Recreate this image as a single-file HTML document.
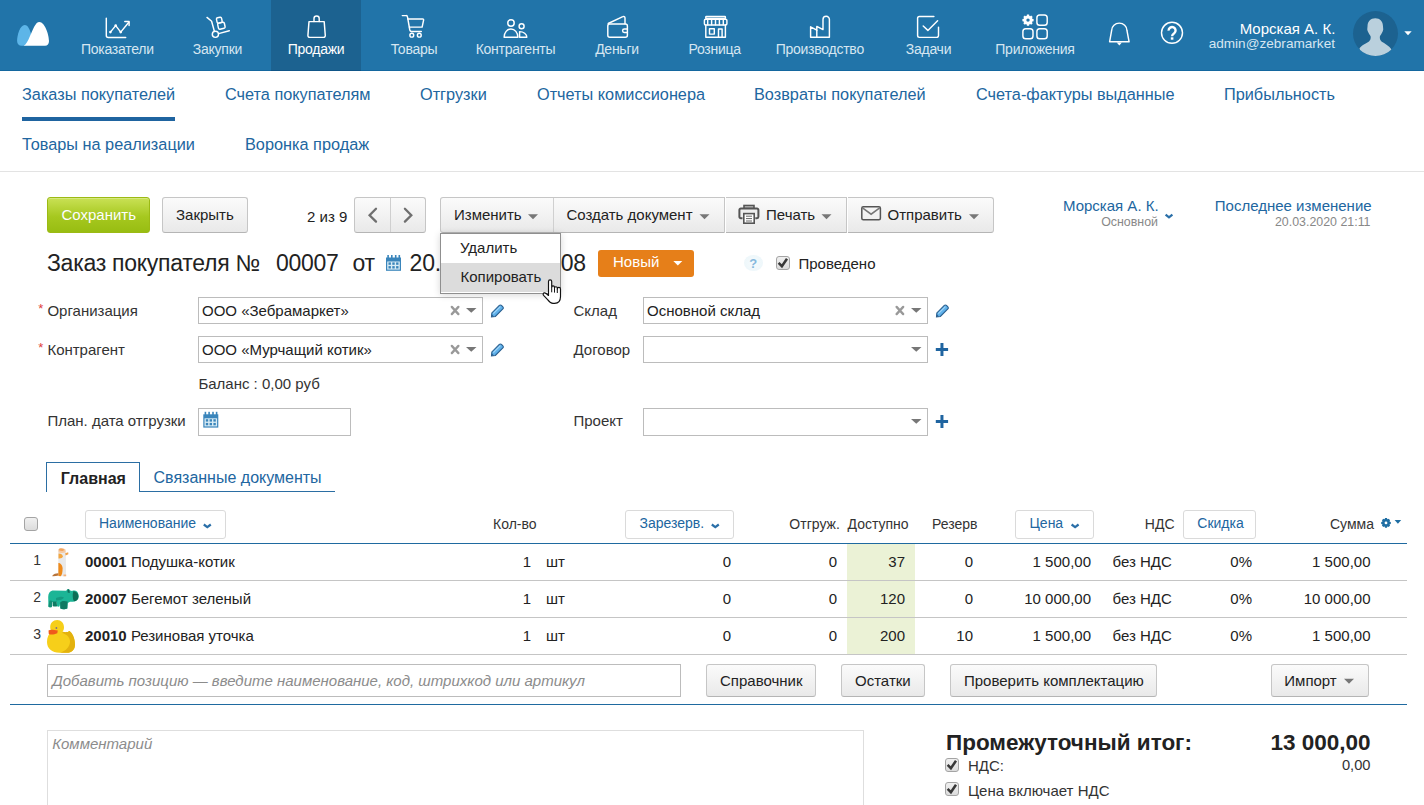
<!DOCTYPE html>
<html><head><meta charset="utf-8">
<style>
*{box-sizing:border-box;margin:0;padding:0}
html,body{width:1424px;height:805px;overflow:hidden;background:#fff}
body{font-family:"Liberation Sans",sans-serif;color:#222;position:relative}
.a{position:absolute;white-space:nowrap}
svg.a{overflow:visible}
</style></head><body>

<div class="a" style="left:0px;top:0px;width:1424px;height:70px;background:#2174a9"></div>
<div class="a" style="left:0px;top:70px;width:1424px;height:1px;background:#14679f"></div>
<div class="a" style="left:271px;top:0px;width:90px;height:70px;background:#1c6290"></div>
<div class="a" style="left:271px;top:70px;width:90px;height:1px;background:#0f5587"></div>
<div class="a" style="top:40.15px;font-size:14px;line-height:18px;color:#d6e6f1;letter-spacing:-0.25px;left:-182.7px;width:600px;text-align:center;">Показатели</div>
<div class="a" style="top:40.15px;font-size:14px;line-height:18px;color:#d6e6f1;letter-spacing:-0.25px;left:-82.5px;width:600px;text-align:center;">Закупки</div>
<div class="a" style="top:40.15px;font-size:14px;line-height:18px;color:#ffffff;letter-spacing:-0.25px;left:16px;width:600px;text-align:center;">Продажи</div>
<div class="a" style="top:40.15px;font-size:14px;line-height:18px;color:#d6e6f1;letter-spacing:-0.25px;left:114px;width:600px;text-align:center;">Товары</div>
<div class="a" style="top:40.15px;font-size:14px;line-height:18px;color:#d6e6f1;letter-spacing:-0.25px;left:215.5px;width:600px;text-align:center;">Контрагенты</div>
<div class="a" style="top:40.15px;font-size:14px;line-height:18px;color:#d6e6f1;letter-spacing:-0.25px;left:317px;width:600px;text-align:center;">Деньги</div>
<div class="a" style="top:40.15px;font-size:14px;line-height:18px;color:#d6e6f1;letter-spacing:-0.25px;left:414.70000000000005px;width:600px;text-align:center;">Розница</div>
<div class="a" style="top:40.15px;font-size:14px;line-height:18px;color:#d6e6f1;letter-spacing:-0.25px;left:519.8px;width:600px;text-align:center;">Производство</div>
<div class="a" style="top:40.15px;font-size:14px;line-height:18px;color:#d6e6f1;letter-spacing:-0.25px;left:628.5px;width:600px;text-align:center;">Задачи</div>
<div class="a" style="top:40.15px;font-size:14px;line-height:18px;color:#d6e6f1;letter-spacing:-0.25px;left:735px;width:600px;text-align:center;">Приложения</div>
<svg class="a" style="left:0;top:0" width="1424" height="70" viewBox="0 0 1424 70">
<g fill="none" stroke="#ffffff" stroke-width="1.45" stroke-linecap="round" stroke-linejoin="round">
<!-- chart -->
<path d="M106.3 18.2V35.5a2 2 0 0 0 2 2H125.7"/>
<path d="M110.4 32.1L115.7 25.6L120.7 32.1L128.8 22.2"/>
<path d="M124.8 21.4H129.1V25.6"/>
<!-- trolley -->
<path d="M207 17.4L211.6 21.3L214.3 31"/>
<circle cx="215.4" cy="34.3" r="3.1"/>
<path d="M218.6 33.6L229.3 30.8"/>
<rect x="-2.6" y="-2.6" width="5.2" height="5.4" rx="1.3" transform="translate(219.3 20.1) rotate(-12)"/>
<rect x="-3.4" y="-3.1" width="6.8" height="6.2" rx="1.3" transform="translate(221.4 25.7) rotate(-12)"/>
<!-- bag -->
<path d="M309 21.6H324.2L325.3 35.6a1.8 1.8 0 0 1 -1.8 1.8H309.7a1.8 1.8 0 0 1 -1.8 -1.8Z"/>
<path d="M314 21.6V18.6a2.6 2.6 0 0 1 5.2 0V21.6"/>
<!-- cart -->
<path d="M402.3 15.6H406a1.5 1.5 0 0 1 1.5 1.3L409.8 30a1.8 1.8 0 0 0 1.8 1.4H421.3"/>
<path d="M407.9 18.9H422.6a1 1 0 0 1 1 1.2L422.1 27.1H409.4"/>
<circle cx="411.8" cy="35.2" r="1.9"/>
<circle cx="419.3" cy="35.2" r="1.9"/>
<!-- people -->
<circle cx="511" cy="23" r="3.2"/>
<path d="M504.1 37.3C504.1 32.5 507.2 29 511 29S517.9 32.5 517.9 37.3Z"/>
<circle cx="521.6" cy="26.2" r="2.5"/>
<path d="M519.6 37.3V31.6C523.5 31.6 526.8 34 526.8 37.3Z"/>
<!-- wallet -->
<rect x="607.8" y="23.9" width="19.6" height="13.4" rx="2"/>
<path d="M608.2 23.5L622.8 16.6a1.5 1.5 0 0 1 2.2 1.3V23.8"/>
<path d="M627.4 29H624.3a1.7 1.7 0 0 0 0 3.4H627.4"/>
<!-- shop -->
<rect x="705.8" y="16.4" width="19.6" height="2" rx="0.5"/>
<rect x="704.4" y="19.2" width="22.5" height="5.7" rx="1.2"/>
<path d="M707.7 19.4V24.7M711.6 19.4V24.7M715.5 19.4V24.7M719.4 19.4V24.7M723.3 19.4V24.7"/>
<path d="M705.8 25V37.3H725.4V25"/>
<rect x="709.5" y="28.7" width="4.8" height="5.4"/>
<path d="M718.5 37.3V29H722.1V37.3"/>
<!-- factory -->
<path d="M810.6 37.3V26.8L816.8 30.2V26.4L823 29.6V19.5a3.2 3.2 0 0 1 6.4 0V37.3Z"/>
<path d="M816.8 30.2V37.2"/>
<!-- tasks -->
<path d="M933.9 16.5H919.4a1.8 1.8 0 0 0 -1.8 1.8V35.6a1.8 1.8 0 0 0 1.8 1.8H936.7a1.8 1.8 0 0 0 1.8 -1.8V27.1"/>
<path d="M923.2 26L927.9 30.4L937.6 20.8"/>
<!-- apps -->
<rect x="1036.9" y="14.9" width="10.3" height="10.3" rx="2.8"/>
<rect x="1022.9" y="28.7" width="10.1" height="10" rx="2.8"/>
<rect x="1036.9" y="28.7" width="10.3" height="10" rx="2.8"/>
<!-- bell -->
<path d="M1111.7 30.2a7.6 7.1 0 0 1 15.2 0L1129.1 41.8H1109.6Z"/>
<!-- help -->
<circle cx="1172" cy="32.8" r="10.5"/>
</g>
<g fill="#ffffff">
<circle cx="110.4" cy="32.1" r="1.3"/><circle cx="115.7" cy="25.6" r="1.3"/><circle cx="120.7" cy="32.1" r="1.3"/>
<path d="M1116.7 42.5H1121.9L1119.3 45.4Z"/>
<!-- gear -->
<path d="M1026.70 15.79 L1026.92 14.50 L1029.08 14.50 L1029.30 15.79 L1030.13 16.13 L1031.19 15.38 L1032.72 16.91 L1031.97 17.97 L1032.31 18.80 L1033.60 19.02 L1033.60 21.18 L1032.31 21.40 L1031.97 22.23 L1032.72 23.29 L1031.19 24.82 L1030.13 24.07 L1029.30 24.41 L1029.08 25.70 L1026.92 25.70 L1026.70 24.41 L1025.87 24.07 L1024.81 24.82 L1023.28 23.29 L1024.03 22.23 L1023.69 21.40 L1022.40 21.18 L1022.40 19.02 L1023.69 18.80 L1024.03 17.97 L1023.28 16.91 L1024.81 15.38 L1025.87 16.13Z"/>
<!-- logo -->
<path d="M24.7 25.1C20 25.1 17.1 35 17.1 41C17.1 44 19 45.8 21.5 45.8H25C28 43 30 40 31.5 35.5C30 30 28 25.1 24.7 25.1Z" fill="#5db5e8"/>
<path d="M39.5 21.9C35 21.9 33 30 30 36C28 41 26 44.5 23.8 45.8H45C47.5 45.8 49 44 49 41C49 34 44.5 21.9 39.5 21.9Z"/>
<!-- avatar -->
<circle cx="1375.5" cy="33.5" r="22.5" fill="#1c6290"/>
<path d="M1404.3 31.3H1411.7L1408 35.2Z"/>
</g>
<circle cx="1028" cy="20.1" r="1.7" fill="#2174a9"/>
<path d="M1168.6 30.6a3.5 3.4 0 1 1 5.6 2.6C1172.9 34.1 1172.1 34.7 1172.1 36.2" fill="none" stroke="#fff" stroke-width="2.4"/><rect x="1170.8" y="37.3" width="2.6" height="2.4" fill="#fff"/>
<clipPath id="avc"><circle cx="1375.5" cy="33.5" r="22.5"/></clipPath>
<g clip-path="url(#avc)" fill="#bad0dd">
<path d="M1375.3 18.3C1370.5 18.3 1367.5 21.5 1367.5 26.5C1367.5 28 1367 29 1367.5 30.5C1368 32 1369 34 1370.5 36C1371 38 1370.5 40 1369 41.5C1366 43.5 1361.5 45 1359.5 48.3L1361 57H1390L1391.5 49.5C1389.5 46 1384.5 43.5 1381.5 41.5C1380 40 1379.5 38 1380 36C1381.5 34 1382.5 32 1383 30.5C1383.5 29 1383 28 1383 26.5C1383 21.5 1380 18.3 1375.3 18.3Z"/>
</g>
</svg>
<div class="a" style="top:19.10px;font-size:15px;line-height:19px;color:#fff;right:88.70000000000005px;">Морская А. К.</div>
<div class="a" style="top:35.49px;font-size:13.6px;line-height:17px;color:#d6e6f1;right:89px;">admin@zebramarket</div>
<div class="a" style="top:83.75px;font-size:16.3px;line-height:20px;color:#2166a0;left:22px;">Заказы покупателей</div>
<div class="a" style="top:83.75px;font-size:16.3px;line-height:20px;color:#2166a0;left:225px;">Счета покупателям</div>
<div class="a" style="top:83.75px;font-size:16.3px;line-height:20px;color:#2166a0;left:420px;">Отгрузки</div>
<div class="a" style="top:83.75px;font-size:16.3px;line-height:20px;color:#2166a0;left:537px;">Отчеты комиссионера</div>
<div class="a" style="top:83.75px;font-size:16.3px;line-height:20px;color:#2166a0;left:754px;">Возвраты покупателей</div>
<div class="a" style="top:83.75px;font-size:16.3px;line-height:20px;color:#2166a0;left:976px;">Счета-фактуры выданные</div>
<div class="a" style="top:83.75px;font-size:16.3px;line-height:20px;color:#2166a0;left:1224px;">Прибыльность</div>
<div class="a" style="top:134.15px;font-size:16.3px;line-height:20px;color:#2166a0;left:22px;">Товары на реализации</div>
<div class="a" style="top:134.15px;font-size:16.3px;line-height:20px;color:#2166a0;left:245px;">Воронка продаж</div>
<div class="a" style="left:22px;top:117px;width:153px;height:4px;background:#1f64a0"></div>
<div class="a" style="left:0px;top:171px;width:1424px;height:1px;background:#e3e3e3"></div>
<div class="a" style="left:47px;top:197px;width:103px;height:36px;border:1px solid #9cba14;border-radius:3px;background:linear-gradient(#c9e155,#a6c81f 55%,#98bd12);box-shadow:inset 0 1px 0 rgba(255,255,255,0.25)"></div>
<div class="a" style="top:205.30px;font-size:15px;line-height:19px;color:#fff;left:61.5px;text-shadow:0 0 0.5px rgba(0,0,0,0.1)">Сохранить</div>
<div class="a" style="left:162px;top:197px;width:86px;height:36px;border:1px solid #c6c6c6;border-bottom-color:#b5b5b5;border-radius:3px;background:linear-gradient(#fbfbfb,#e9e9e9);"></div>
<div class="a" style="top:205.30px;font-size:15px;line-height:19px;color:#222;left:176px;">Закрыть</div>
<div class="a" style="top:207.00px;font-size:15px;line-height:19px;color:#222;left:307px;">2 из 9</div>
<div class="a" style="left:354px;top:197px;width:72px;height:36px;border:1px solid #c6c6c6;border-bottom-color:#b5b5b5;border-radius:3px;background:linear-gradient(#fbfbfb,#e9e9e9);"></div>
<div class="a" style="left:390px;top:198px;width:1px;height:34px;background:#cfcfcf"></div>
<svg class="a" style="left:0;top:0" width="1424" height="300" viewBox="0 0 1424 300"><g fill="none" stroke="#6f6f6f" stroke-width="2.3" stroke-linecap="round" stroke-linejoin="miter"><path d="M376 208.8L369.6 215.2L376 221.6"/><path d="M404.9 208.8L411.3 215.2L404.9 221.6"/></g></svg>
<div class="a" style="left:440px;top:197px;width:285px;height:36px;border:1px solid #c6c6c6;border-bottom-color:#b5b5b5;border-radius:3px 0 0 3px;background:linear-gradient(#fbfbfb,#e9e9e9);"></div>
<div class="a" style="left:726px;top:197px;width:121px;height:36px;border:1px solid #c6c6c6;border-left:none;border-bottom-color:#b5b5b5;background:linear-gradient(#fbfbfb,#e9e9e9);"></div>
<div class="a" style="left:848px;top:197px;width:146px;height:36px;border:1px solid #c6c6c6;border-left:none;border-bottom-color:#b5b5b5;border-radius:0 3px 3px 0;background:linear-gradient(#fbfbfb,#e9e9e9);"></div>
<div class="a" style="left:553px;top:198px;width:1px;height:34px;background:#d0d0d0"></div>
<div class="a" style="top:205.30px;font-size:15px;line-height:19px;color:#222;left:454px;">Изменить</div>
<div class="a" style="top:205.30px;font-size:15px;line-height:19px;color:#222;left:566.4px;">Создать документ</div>
<div class="a" style="top:205.30px;font-size:15px;line-height:19px;color:#222;left:766px;">Печать</div>
<div class="a" style="top:205.30px;font-size:15px;line-height:19px;color:#222;left:887.5px;">Отправить</div>
<svg class="a" style="left:0;top:0" width="1424" height="805" viewBox="0 0 1424 805"><path d="M528 214.2H538L533.0 219.2Z" fill="#777"/><path d="M699.5 214.2H709.5L704.5 219.2Z" fill="#777"/><path d="M821.5 214.2H831.5L826.5 219.2Z" fill="#777"/><path d="M969 214.2H979L974.0 219.2Z" fill="#777"/><g fill="none" stroke="#555" stroke-width="2"><rect x="744" y="205.5" width="10" height="3" fill="#c9c9c9" stroke-width="1.6"/><path d="M742.5 218.2H740.8a1.4 1.4 0 0 1 -1.4 -1.4V210a1.4 1.4 0 0 1 1.4 -1.4H757a1.4 1.4 0 0 1 1.4 1.4V216.8a1.4 1.4 0 0 1 -1.4 1.4H755.3" fill="#eee"/><rect x="743.8" y="213.6" width="10.4" height="9.6" fill="#fff" stroke-width="1.6"/></g><path d="M746 216.2H752M746 218.6H752M746 221H752" stroke="#666" stroke-width="1"/><g fill="none" stroke="#555" stroke-width="1.5"><rect x="861.8" y="206.8" width="18.6" height="13" rx="1.5"/><path d="M862.5 207.8L871.1 214.2L879.7 207.8" stroke="#777"/></g></svg>
<div class="a" style="top:196.30px;font-size:15px;line-height:19px;color:#2166a0;left:1063px;">Морская А. К.</div>
<div class="a" style="top:213.70px;font-size:12.4px;line-height:16px;color:#888;right:266px;">Основной</div>
<svg class="a" style="left:1164px;top:212px" width="12" height="8" viewBox="0 0 12 8"><path d="M1.6 2.6L5 5.4L8.4 2.6" fill="none" stroke="#2a6fa8" stroke-width="2.2"/></svg>
<div class="a" style="top:196.30px;font-size:15px;line-height:19px;color:#2166a0;left:1214.8px;">Последнее изменение</div>
<div class="a" style="top:213.70px;font-size:12.4px;line-height:16px;color:#888;right:53.5px;">20.03.2020 21:11</div>
<div class="a" style="top:248.53px;font-size:23px;line-height:29px;color:#222;letter-spacing:-0.27px;left:47px;">Заказ покупателя №</div>
<div class="a" style="top:248.53px;font-size:23px;line-height:29px;color:#222;letter-spacing:-0.27px;left:276px;">00007</div>
<div class="a" style="top:248.53px;font-size:23px;line-height:29px;color:#222;letter-spacing:-0.27px;left:352.5px;">от</div>
<div class="a" style="top:248.53px;font-size:23px;line-height:29px;color:#222;letter-spacing:-0.16px;left:409.5px;">20.03.2020 21:08</div>
<svg class="a" style="left:0;top:0" width="1424" height="805" viewBox="0 0 1424 805"><g transform="translate(386 255)"><rect x="0" y="2.5" width="15" height="13.3" fill="#3a85bb"/><rect x="1.3" y="0" width="1.6" height="3.5" fill="#3a85bb"/><rect x="5" y="0" width="1.6" height="3.5" fill="#3a85bb"/><rect x="8.9" y="0" width="1.6" height="3.5" fill="#3a85bb"/><rect x="12.5" y="0" width="1.6" height="3.5" fill="#3a85bb"/><rect x="1.2" y="6.5" width="12.6" height="8.1" fill="#d9ecf5"/><rect x="2.5" y="7.3999999999999995" width="2.4" height="2.4" fill="#3a85bb"/><rect x="2.5" y="11.100000000000001" width="2.4" height="2.4" fill="#3a85bb"/><rect x="6.3" y="7.3999999999999995" width="2.4" height="2.4" fill="#3a85bb"/><rect x="6.3" y="11.100000000000001" width="2.4" height="2.4" fill="#3a85bb"/><rect x="10.100000000000001" y="7.3999999999999995" width="2.4" height="2.4" fill="#3a85bb"/><rect x="10.100000000000001" y="11.100000000000001" width="2.4" height="2.4" fill="#3a85bb"/></g></svg>
<div class="a" style="left:598px;top:250px;width:96px;height:27px;background:#e67f19;border-radius:3px"></div>
<div class="a" style="top:252.10px;font-size:15px;line-height:19px;color:#fff;left:613px;">Новый</div>
<svg class="a" style="left:0;top:0" width="1424" height="805" viewBox="0 0 1424 805"><path d="M673.3 261H682.3L677.8 265.6Z" fill="#fff"/></svg>
<div class="a" style="left:744px;top:255px;width:19px;height:16px;border-radius:50%;background:radial-gradient(#f6fbfd,#eaf5f9)"></div>
<div class="a" style="top:255.50px;font-size:13px;line-height:16px;color:#86b9dd;font-weight:bold;left:453.29999999999995px;width:600px;text-align:center;">?</div>
<div class="a" style="left:776px;top:256px;width:14px;height:14px;border:1px solid #a4a4a4;border-radius:3px;background:linear-gradient(#f0f0f0,#dcdcdc)"></div><svg class="a" style="left:776px;top:256px" width="14" height="14" viewBox="0 0 14 14"><path d="M2.6 6.9L5.9 10.2L11 2.8" fill="none" stroke="#383838" stroke-width="2.5"/></svg>
<div class="a" style="top:254.30px;font-size:15px;line-height:19px;color:#222;left:798.5px;">Проведено</div>
<div class="a" style="top:301.00px;font-size:13px;line-height:16px;color:#e0403a;left:38.3px;">*</div>
<div class="a" style="top:300.60px;font-size:15px;line-height:19px;color:#333;left:47.4px;">Организация</div>
<div class="a" style="left:198px;top:297px;width:285px;height:27px;border:1px solid #bcbcbc;background:#fff"></div>
<div class="a" style="top:300.90px;font-size:15px;line-height:19px;color:#222;left:202px;">ООО «Зебрамаркет»</div>
<div class="a" style="top:340.00px;font-size:13px;line-height:16px;color:#e0403a;left:38.3px;">*</div>
<div class="a" style="top:339.60px;font-size:15px;line-height:19px;color:#333;left:47.4px;">Контрагент</div>
<div class="a" style="left:198px;top:336px;width:285px;height:27px;border:1px solid #bcbcbc;background:#fff"></div>
<div class="a" style="top:339.90px;font-size:15px;line-height:19px;color:#222;left:202px;">ООО «Мурчащий котик»</div>
<div class="a" style="top:373.60px;font-size:15px;line-height:19px;color:#333;left:198.4px;">Баланс : 0,00 руб</div>
<div class="a" style="top:411.10px;font-size:15px;line-height:19px;color:#333;left:47.4px;">План. дата отгрузки</div>
<div class="a" style="left:198px;top:408px;width:153px;height:28px;border:1px solid #bcbcbc;background:#fff"></div>
<div class="a" style="top:300.60px;font-size:15px;line-height:19px;color:#333;left:573.5px;">Склад</div>
<div class="a" style="left:643px;top:297px;width:285px;height:27px;border:1px solid #bcbcbc;background:#fff"></div>
<div class="a" style="top:300.90px;font-size:15px;line-height:19px;color:#222;left:647px;">Основной склад</div>
<div class="a" style="top:339.60px;font-size:15px;line-height:19px;color:#333;left:573.5px;">Договор</div>
<div class="a" style="left:643px;top:336px;width:285px;height:27px;border:1px solid #bcbcbc;background:#fff"></div>
<div class="a" style="top:411.10px;font-size:15px;line-height:19px;color:#333;left:573.5px;">Проект</div>
<div class="a" style="left:643px;top:408px;width:285px;height:28px;border:1px solid #bcbcbc;background:#fff"></div>
<svg class="a" style="left:0;top:0" width="1424" height="805" viewBox="0 0 1424 805"><path d="M451.8 306.90000000000003L458.4 314.1M458.4 306.90000000000003L451.8 314.1" stroke="#999" stroke-width="2.3" stroke-linecap="round"/><path d="M466 308H476.5L471.25 312.7Z" fill="#777"/><path d="M451.8 345.90000000000003L458.4 353.1M458.4 345.90000000000003L451.8 353.1" stroke="#999" stroke-width="2.3" stroke-linecap="round"/><path d="M466 347H476.5L471.25 351.7Z" fill="#777"/><path d="M896.6 306.90000000000003L903.2 314.1M903.2 306.90000000000003L896.6 314.1" stroke="#999" stroke-width="2.3" stroke-linecap="round"/><path d="M911 308H921.5L916.25 312.7Z" fill="#777"/><path d="M911 347H921.5L916.25 351.7Z" fill="#777"/><path d="M911 419H921.5L916.25 423.7Z" fill="#777"/><g transform="translate(491.5 316.8) rotate(-45)"><path d="M0 0L3 -2.5H13.6a1.5 1.5 0 0 1 1.5 1.5V1A1.5 1.5 0 0 1 13.6 2.5H3Z" fill="#5eb0ea" stroke="#2b5f8e" stroke-width="1.1"/><path d="M0 0L2 -1.6V1.6Z" fill="#2b5f8e"/><path d="M3.5 -0.9H13.5" stroke="#a8d8f8" stroke-width="1"/></g><g transform="translate(491.5 355.8) rotate(-45)"><path d="M0 0L3 -2.5H13.6a1.5 1.5 0 0 1 1.5 1.5V1A1.5 1.5 0 0 1 13.6 2.5H3Z" fill="#5eb0ea" stroke="#2b5f8e" stroke-width="1.1"/><path d="M0 0L2 -1.6V1.6Z" fill="#2b5f8e"/><path d="M3.5 -0.9H13.5" stroke="#a8d8f8" stroke-width="1"/></g><g transform="translate(936.5 316.8) rotate(-45)"><path d="M0 0L3 -2.5H13.6a1.5 1.5 0 0 1 1.5 1.5V1A1.5 1.5 0 0 1 13.6 2.5H3Z" fill="#5eb0ea" stroke="#2b5f8e" stroke-width="1.1"/><path d="M0 0L2 -1.6V1.6Z" fill="#2b5f8e"/><path d="M3.5 -0.9H13.5" stroke="#a8d8f8" stroke-width="1"/></g><path d="M935.8 349.5H948.0999999999999M941.9499999999999 343V356" stroke="#1f64a0" stroke-width="3"/><path d="M935.8 421.5H948.0999999999999M941.9499999999999 415V428" stroke="#1f64a0" stroke-width="3"/></svg>
<svg class="a" style="left:0;top:0" width="1424" height="805" viewBox="0 0 1424 805"><g transform="translate(203.3 411.8)"><rect x="0" y="2.5" width="15" height="13.3" fill="#3a85bb"/><rect x="1.3" y="0" width="1.6" height="3.5" fill="#3a85bb"/><rect x="5" y="0" width="1.6" height="3.5" fill="#3a85bb"/><rect x="8.9" y="0" width="1.6" height="3.5" fill="#3a85bb"/><rect x="12.5" y="0" width="1.6" height="3.5" fill="#3a85bb"/><rect x="1.2" y="6.5" width="12.6" height="8.1" fill="#d9ecf5"/><rect x="2.5" y="7.3999999999999995" width="2.4" height="2.4" fill="#3a85bb"/><rect x="2.5" y="11.100000000000001" width="2.4" height="2.4" fill="#3a85bb"/><rect x="6.3" y="7.3999999999999995" width="2.4" height="2.4" fill="#3a85bb"/><rect x="6.3" y="11.100000000000001" width="2.4" height="2.4" fill="#3a85bb"/><rect x="10.100000000000001" y="7.3999999999999995" width="2.4" height="2.4" fill="#3a85bb"/><rect x="10.100000000000001" y="11.100000000000001" width="2.4" height="2.4" fill="#3a85bb"/></g></svg>
<div class="a" style="left:440px;top:233px;width:121px;height:61px;border:1px solid #8f8f8f;background:#fff;box-shadow:0 1px 7px rgba(0,0,0,0.16)"></div>
<div class="a" style="left:441px;top:263px;width:119px;height:29px;background:#dcdcdc"></div>
<div class="a" style="top:238.30px;font-size:15px;line-height:19px;color:#222;left:460px;">Удалить</div>
<div class="a" style="top:267.10px;font-size:15px;line-height:19px;color:#222;left:460.5px;">Копировать</div>
<svg class="a" style="left:541px;top:278px" width="24" height="28" viewBox="0 0 24 28"><path d="M7.5 3.4a1.6 1.6 0 0 1 3.2 0V9.2a1.4 1.4 0 0 1 2.8 0V10.1a1.4 1.4 0 0 1 2.8 0V10.9a1.6 1.6 0 0 1 3.2 0V18.5C19.5 22.3 17.5 25.3 13.6 25.3H12C9.6 25.3 8.1 23.6 6.6 21.6L2.6 17.4C1.6 16.2 2.2 14.7 3.7 14.9C5 15.1 6.5 16.5 7.5 17.5Z" fill="#fff" stroke="#111" stroke-width="1.15" stroke-linejoin="round"/><path d="M10.7 9.2V14.3M13.5 10.1V14.6M16.3 10.9V15" stroke="#111" stroke-width="1"/></svg>
<div class="a" style="left:46px;top:462px;width:94px;height:30px;border:1px solid #2b6ea3;border-bottom:none;background:#fff"></div>
<div class="a" style="left:139px;top:491px;width:196px;height:1px;background:#2b6ea3"></div>
<div class="a" style="top:469.46px;font-size:16px;line-height:20px;color:#222;font-weight:bold;left:60.8px;">Главная</div>
<div class="a" style="top:468.06px;font-size:16px;line-height:20px;color:#2166a0;left:153.5px;">Связанные документы</div>
<div class="a" style="left:24px;top:517px;width:14px;height:14px;border:1px solid #a4a4a4;border-radius:3px;background:linear-gradient(#f0f0f0,#dcdcdc)"></div>
<div class="a" style="left:85px;top:510px;width:141px;height:29px;border:1px solid #dadada;border-radius:3px;background:#fff"></div>
<div class="a" style="top:514.15px;font-size:14px;line-height:18px;color:#2166a0;left:99px;">Наименование</div>
<div class="a" style="top:515.45px;font-size:14px;line-height:18px;color:#333;left:493px;">Кол-во</div>
<div class="a" style="left:625px;top:510px;width:109px;height:29px;border:1px solid #dadada;border-radius:3px;background:#fff"></div>
<div class="a" style="top:514.15px;font-size:14px;line-height:18px;color:#2166a0;left:639.5px;">Зарезерв.</div>
<div class="a" style="top:515.45px;font-size:14px;line-height:18px;color:#333;right:584.2px;">Отгруж.</div>
<div class="a" style="top:515.45px;font-size:14px;line-height:18px;color:#333;left:847.5px;">Доступно</div>
<div class="a" style="top:515.45px;font-size:14px;line-height:18px;color:#333;left:932px;">Резерв</div>
<div class="a" style="left:1015px;top:510px;width:79px;height:29px;border:1px solid #dadada;border-radius:3px;background:#fff"></div>
<div class="a" style="top:514.15px;font-size:14px;line-height:18px;color:#2166a0;left:1029.5px;">Цена</div>
<div class="a" style="top:515.45px;font-size:14px;line-height:18px;color:#333;right:249.5px;">НДС</div>
<div class="a" style="left:1183px;top:510px;width:73px;height:29px;border:1px solid #dadada;border-radius:3px;background:#fff"></div>
<div class="a" style="top:514.15px;font-size:14px;line-height:18px;color:#2166a0;left:1197.3px;">Скидка</div>
<div class="a" style="top:515.45px;font-size:14px;line-height:18px;color:#333;right:50px;">Сумма</div>
<svg class="a" style="left:0;top:0" width="1424" height="805" viewBox="0 0 1424 805"><path d="M203.8 524.5L207.3 527.1L210.8 524.5" fill="none" stroke="#2a6fa8" stroke-width="2.2"/><path d="M711.8 524.5L715.3 527.1L718.8 524.5" fill="none" stroke="#2a6fa8" stroke-width="2.2"/><path d="M1071.6 524.5L1075.1 527.1L1078.6 524.5" fill="none" stroke="#2a6fa8" stroke-width="2.2"/><path d="M1384.76 519.10 L1385.00 518.10 L1387.00 518.10 L1387.24 519.10 L1387.81 519.33 L1388.68 518.80 L1390.10 520.22 L1389.57 521.09 L1389.80 521.66 L1390.80 521.90 L1390.80 523.90 L1389.80 524.14 L1389.57 524.71 L1390.10 525.58 L1388.68 527.00 L1387.81 526.47 L1387.24 526.70 L1387.00 527.70 L1385.00 527.70 L1384.76 526.70 L1384.19 526.47 L1383.32 527.00 L1381.90 525.58 L1382.43 524.71 L1382.20 524.14 L1381.20 523.90 L1381.20 521.90 L1382.20 521.66 L1382.43 521.09 L1381.90 520.22 L1383.32 518.80 L1384.19 519.33Z" fill="#1f6ea3"/><circle cx="1386" cy="522.9" r="1.4" fill="#fff"/><path d="M1394.6 520H1401.1999999999998L1397.8999999999999 523.8Z" fill="#1f6ea3"/></svg>
<div class="a" style="left:10px;top:543px;width:1397px;height:1px;background:#1f6aa0"></div>
<div class="a" style="left:847px;top:544px;width:68px;height:110px;background:#ebf2d6"></div>
<div class="a" style="left:10px;top:580px;width:1397px;height:1px;background:#c5c5c5"></div>
<div class="a" style="left:10px;top:617px;width:1397px;height:1px;background:#c5c5c5"></div>
<div class="a" style="left:10px;top:654px;width:1397px;height:1px;background:#c5c5c5"></div>
<div class="a" style="top:550.85px;font-size:14px;line-height:18px;color:#333;left:33.3px;">1</div>
<div class="a" style="top:552.30px;font-size:15px;line-height:19px;color:#222;left:85px;"><b>00001</b> Подушка-котик</div>
<div class="a" style="top:552.30px;font-size:15px;line-height:19px;color:#222;right:893px;">1</div>
<div class="a" style="top:552.30px;font-size:15px;line-height:19px;color:#222;left:546px;">шт</div>
<div class="a" style="top:552.30px;font-size:15px;line-height:19px;color:#222;right:693px;">0</div>
<div class="a" style="top:552.30px;font-size:15px;line-height:19px;color:#222;right:587px;">0</div>
<div class="a" style="top:552.30px;font-size:15px;line-height:19px;color:#222;right:519px;">37</div>
<div class="a" style="top:552.30px;font-size:15px;line-height:19px;color:#222;right:451px;">0</div>
<div class="a" style="top:552.30px;font-size:15px;line-height:19px;color:#222;right:333px;">1 500,00</div>
<div class="a" style="top:552.30px;font-size:15px;line-height:19px;color:#222;left:1112.5px;">без НДС</div>
<div class="a" style="top:552.30px;font-size:15px;line-height:19px;color:#222;right:172px;">0%</div>
<div class="a" style="top:552.30px;font-size:15px;line-height:19px;color:#222;right:53.5px;">1 500,00</div>
<div class="a" style="top:587.85px;font-size:14px;line-height:18px;color:#333;left:33.3px;">2</div>
<div class="a" style="top:589.30px;font-size:15px;line-height:19px;color:#222;left:85px;"><b>20007</b> Бегемот зеленый</div>
<div class="a" style="top:589.30px;font-size:15px;line-height:19px;color:#222;right:893px;">1</div>
<div class="a" style="top:589.30px;font-size:15px;line-height:19px;color:#222;left:546px;">шт</div>
<div class="a" style="top:589.30px;font-size:15px;line-height:19px;color:#222;right:693px;">0</div>
<div class="a" style="top:589.30px;font-size:15px;line-height:19px;color:#222;right:587px;">0</div>
<div class="a" style="top:589.30px;font-size:15px;line-height:19px;color:#222;right:519px;">120</div>
<div class="a" style="top:589.30px;font-size:15px;line-height:19px;color:#222;right:451px;">0</div>
<div class="a" style="top:589.30px;font-size:15px;line-height:19px;color:#222;right:333px;">10 000,00</div>
<div class="a" style="top:589.30px;font-size:15px;line-height:19px;color:#222;left:1112.5px;">без НДС</div>
<div class="a" style="top:589.30px;font-size:15px;line-height:19px;color:#222;right:172px;">0%</div>
<div class="a" style="top:589.30px;font-size:15px;line-height:19px;color:#222;right:53.5px;">10 000,00</div>
<div class="a" style="top:624.85px;font-size:14px;line-height:18px;color:#333;left:33.3px;">3</div>
<div class="a" style="top:626.30px;font-size:15px;line-height:19px;color:#222;left:85px;"><b>20010</b> Резиновая уточка</div>
<div class="a" style="top:626.30px;font-size:15px;line-height:19px;color:#222;right:893px;">1</div>
<div class="a" style="top:626.30px;font-size:15px;line-height:19px;color:#222;left:546px;">шт</div>
<div class="a" style="top:626.30px;font-size:15px;line-height:19px;color:#222;right:693px;">0</div>
<div class="a" style="top:626.30px;font-size:15px;line-height:19px;color:#222;right:587px;">0</div>
<div class="a" style="top:626.30px;font-size:15px;line-height:19px;color:#222;right:519px;">200</div>
<div class="a" style="top:626.30px;font-size:15px;line-height:19px;color:#222;right:451px;">10</div>
<div class="a" style="top:626.30px;font-size:15px;line-height:19px;color:#222;right:333px;">1 500,00</div>
<div class="a" style="top:626.30px;font-size:15px;line-height:19px;color:#222;left:1112.5px;">без НДС</div>
<div class="a" style="top:626.30px;font-size:15px;line-height:19px;color:#222;right:172px;">0%</div>
<div class="a" style="top:626.30px;font-size:15px;line-height:19px;color:#222;right:53.5px;">1 500,00</div>
<svg class="a" style="left:0;top:0" width="1424" height="805" viewBox="0 0 1424 805"><path d="M58.3 550C58.5 548.5 60 548.3 61.5 548.4C63.5 548.5 65.5 549 65.8 551L66 574C66 576 64.5 576.5 62 576.3C59.5 576.2 58.3 575.5 58.3 573.5Z" fill="#e9e9e9"/><path d="M58.4 549.5C59.5 548 63 547.9 65.3 549.3L65.6 552.5C63.5 553 60.5 553 58.5 552.5Z" fill="#f6c9a2"/><path d="M59 549C60.5 548.4 62.5 548.4 64 549.2L63.5 550.8C62 551.2 60.5 551 59.2 550.6Z" fill="#f2a55c"/><path d="M65.2 553.3L68.2 552.2L68.4 554.2L65.6 555.6Z" fill="#f0a24a"/><path d="M58.5 553.5C60.5 553.3 62.8 554.5 62.8 556.3C62.8 558 60.5 558.8 58.5 558.5Z" fill="#f3a640"/><path d="M58.4 563C60.8 563 62.6 565.5 62.6 568.5C62.6 572 62 575 60.8 576.3L58.4 576Z" fill="#ee8a1a"/><path d="M52.3 575.8C54 573.8 56 573.2 58.4 573.3V575.6C56.5 576 54.5 576.3 52.3 576.2Z" fill="#b8743a"/><path d="M63.5 574.5H66.2V576.3H63.5Z" fill="#f2b27a"/><path d="M52.5 590.6C50 591 48.2 593.5 48.2 597L48.4 606.5C48.6 607.3 50.5 607.3 51.8 607L52.4 602L56.6 602.3L57.1 606.3C58 607 59.2 606.8 59.6 606.3L60 604L60.4 608.6C62 609.5 65.5 609.3 67.3 608.5L67.8 603L70 601.8C73 602 76.5 601.5 78.3 598.5C79 596 78.6 593 77 591.5C75.5 590.3 73.5 590.5 72 591L69.5 590.3L68.2 588.9C67.2 589.3 66.5 590 66.3 590.8Z" fill="#1cb596"/><path d="M60.2 602.5C61 601 64 600.5 67.5 601.5L67.3 608.5C65.5 609.3 62 609.5 60.4 608.6Z" fill="#0f7a62"/><path d="M49.5 601C50.5 600.3 52 600.5 52.4 601.5L51.8 607C50.5 607.3 48.6 607.3 48.4 606.5Z" fill="#148f75"/><path d="M53 601.5L56.6 601.5L57.1 606.3C56 606.6 53.5 606.6 52.6 606Z" fill="#0f7a62"/><path d="M73.5 591C76.5 591.5 78.5 593.5 78.5 596.5C78.5 599.5 76.5 601.3 74 601.3C72.5 599 72.3 594 73.5 591Z" fill="#0c6e56"/><path d="M56 598C59 597 62 596 64 597.5C63 599.5 60 600.5 56 600.5Z" fill="#159a80"/><path d="M67.5 589.5L69.2 589.1L69.8 593L67.6 592.5Z" fill="#0f6f5c"/><path d="M57.2 620C53.2 620 50.2 623 50.2 627.2C50.2 629 50.8 630.2 51.5 631.3C48.5 634 47 637.5 47 642C47 648.5 52 652.8 59.5 652.8H66.5C72 652.8 75 649.5 75 644.5C75 640 73.5 636 71 632.5L69.5 631C67.5 632.5 65 632.3 62.5 631.8C63.5 630.5 64 629 64 627.2C64 623 61 620 57.2 620Z" fill="#f6cf1a"/><path d="M62.5 631.8C65 632.3 67.5 632.5 69.5 631C72.5 633 75 638 75 644.5C75 649.5 72 652.8 66.5 652.8H60C65.5 651 70 647 70 641.5C70 637.5 67 634.5 62.5 633Z" fill="#e3b20e"/><path d="M48.5 630.6C50 629.2 53 629.5 57.8 630.6L57.3 633.3C54 634.8 50.5 635 48.8 634Z" fill="#ef5a1c"/><circle cx="56.4" cy="628" r="0.9" fill="#7d6f8a"/></svg>
<div class="a" style="left:47px;top:664px;width:634px;height:33px;border:1px solid #bcbcbc;background:#fff"></div>
<div class="a" style="top:670.60px;font-size:15px;line-height:19px;color:#8c8c8c;font-style:italic;left:52.2px;">Добавить позицию — введите наименование, код, штрихкод или артикул</div>
<div class="a" style="left:706px;top:664px;width:110px;height:33px;border:1px solid #c6c6c6;border-bottom-color:#b5b5b5;border-radius:3px;background:linear-gradient(#fbfbfb,#e9e9e9);"></div>
<div class="a" style="top:670.60px;font-size:15px;line-height:19px;color:#222;left:720px;">Справочник</div>
<div class="a" style="left:841px;top:664px;width:84px;height:33px;border:1px solid #c6c6c6;border-bottom-color:#b5b5b5;border-radius:3px;background:linear-gradient(#fbfbfb,#e9e9e9);"></div>
<div class="a" style="top:670.60px;font-size:15px;line-height:19px;color:#222;left:855px;">Остатки</div>
<div class="a" style="left:950px;top:664px;width:207px;height:33px;border:1px solid #c6c6c6;border-bottom-color:#b5b5b5;border-radius:3px;background:linear-gradient(#fbfbfb,#e9e9e9);"></div>
<div class="a" style="top:670.60px;font-size:15px;line-height:19px;color:#222;left:964px;">Проверить комплектацию</div>
<div class="a" style="left:1271px;top:664px;width:98px;height:33px;border:1px solid #c6c6c6;border-bottom-color:#b5b5b5;border-radius:3px;background:linear-gradient(#fbfbfb,#e9e9e9);"></div>
<div class="a" style="top:670.60px;font-size:15px;line-height:19px;color:#222;left:1284.3px;">Импорт</div>
<svg class="a" style="left:0;top:0" width="1424" height="805" viewBox="0 0 1424 805"><path d="M1344 678.7H1354L1349.0 683.7Z" fill="#777"/></svg>
<div class="a" style="left:10px;top:704px;width:1397px;height:1px;background:#1f6aa0"></div>
<div class="a" style="left:47px;top:730px;width:817px;height:100px;border:1px solid #dedede;background:#fff"></div>
<div class="a" style="top:733.70px;font-size:15px;line-height:19px;color:#8c8c8c;font-style:italic;left:52.2px;">Комментарий</div>
<div class="a" style="top:729.00px;font-size:22.5px;line-height:28px;color:#222;font-weight:bold;left:946px;">Промежуточный итог:</div>
<div class="a" style="top:729.00px;font-size:22.5px;line-height:28px;color:#222;font-weight:bold;right:53.5px;">13 000,00</div>
<div class="a" style="left:945px;top:758px;width:14px;height:14px;border:1px solid #a4a4a4;border-radius:3px;background:linear-gradient(#f0f0f0,#dcdcdc)"></div><svg class="a" style="left:945px;top:758px" width="14" height="14" viewBox="0 0 14 14"><path d="M2.6 6.9L5.9 10.2L11 2.8" fill="none" stroke="#383838" stroke-width="2.5"/></svg>
<div class="a" style="top:756.30px;font-size:15px;line-height:19px;color:#333;left:968px;">НДС:</div>
<div class="a" style="top:755.91px;font-size:14.7px;line-height:18px;color:#333;right:53.5px;">0,00</div>
<div class="a" style="left:945px;top:782px;width:14px;height:14px;border:1px solid #a4a4a4;border-radius:3px;background:linear-gradient(#f0f0f0,#dcdcdc)"></div><svg class="a" style="left:945px;top:782px" width="14" height="14" viewBox="0 0 14 14"><path d="M2.6 6.9L5.9 10.2L11 2.8" fill="none" stroke="#383838" stroke-width="2.5"/></svg>
<div class="a" style="top:780.70px;font-size:15px;line-height:19px;color:#333;left:968px;">Цена включает НДС</div>
</body></html>
